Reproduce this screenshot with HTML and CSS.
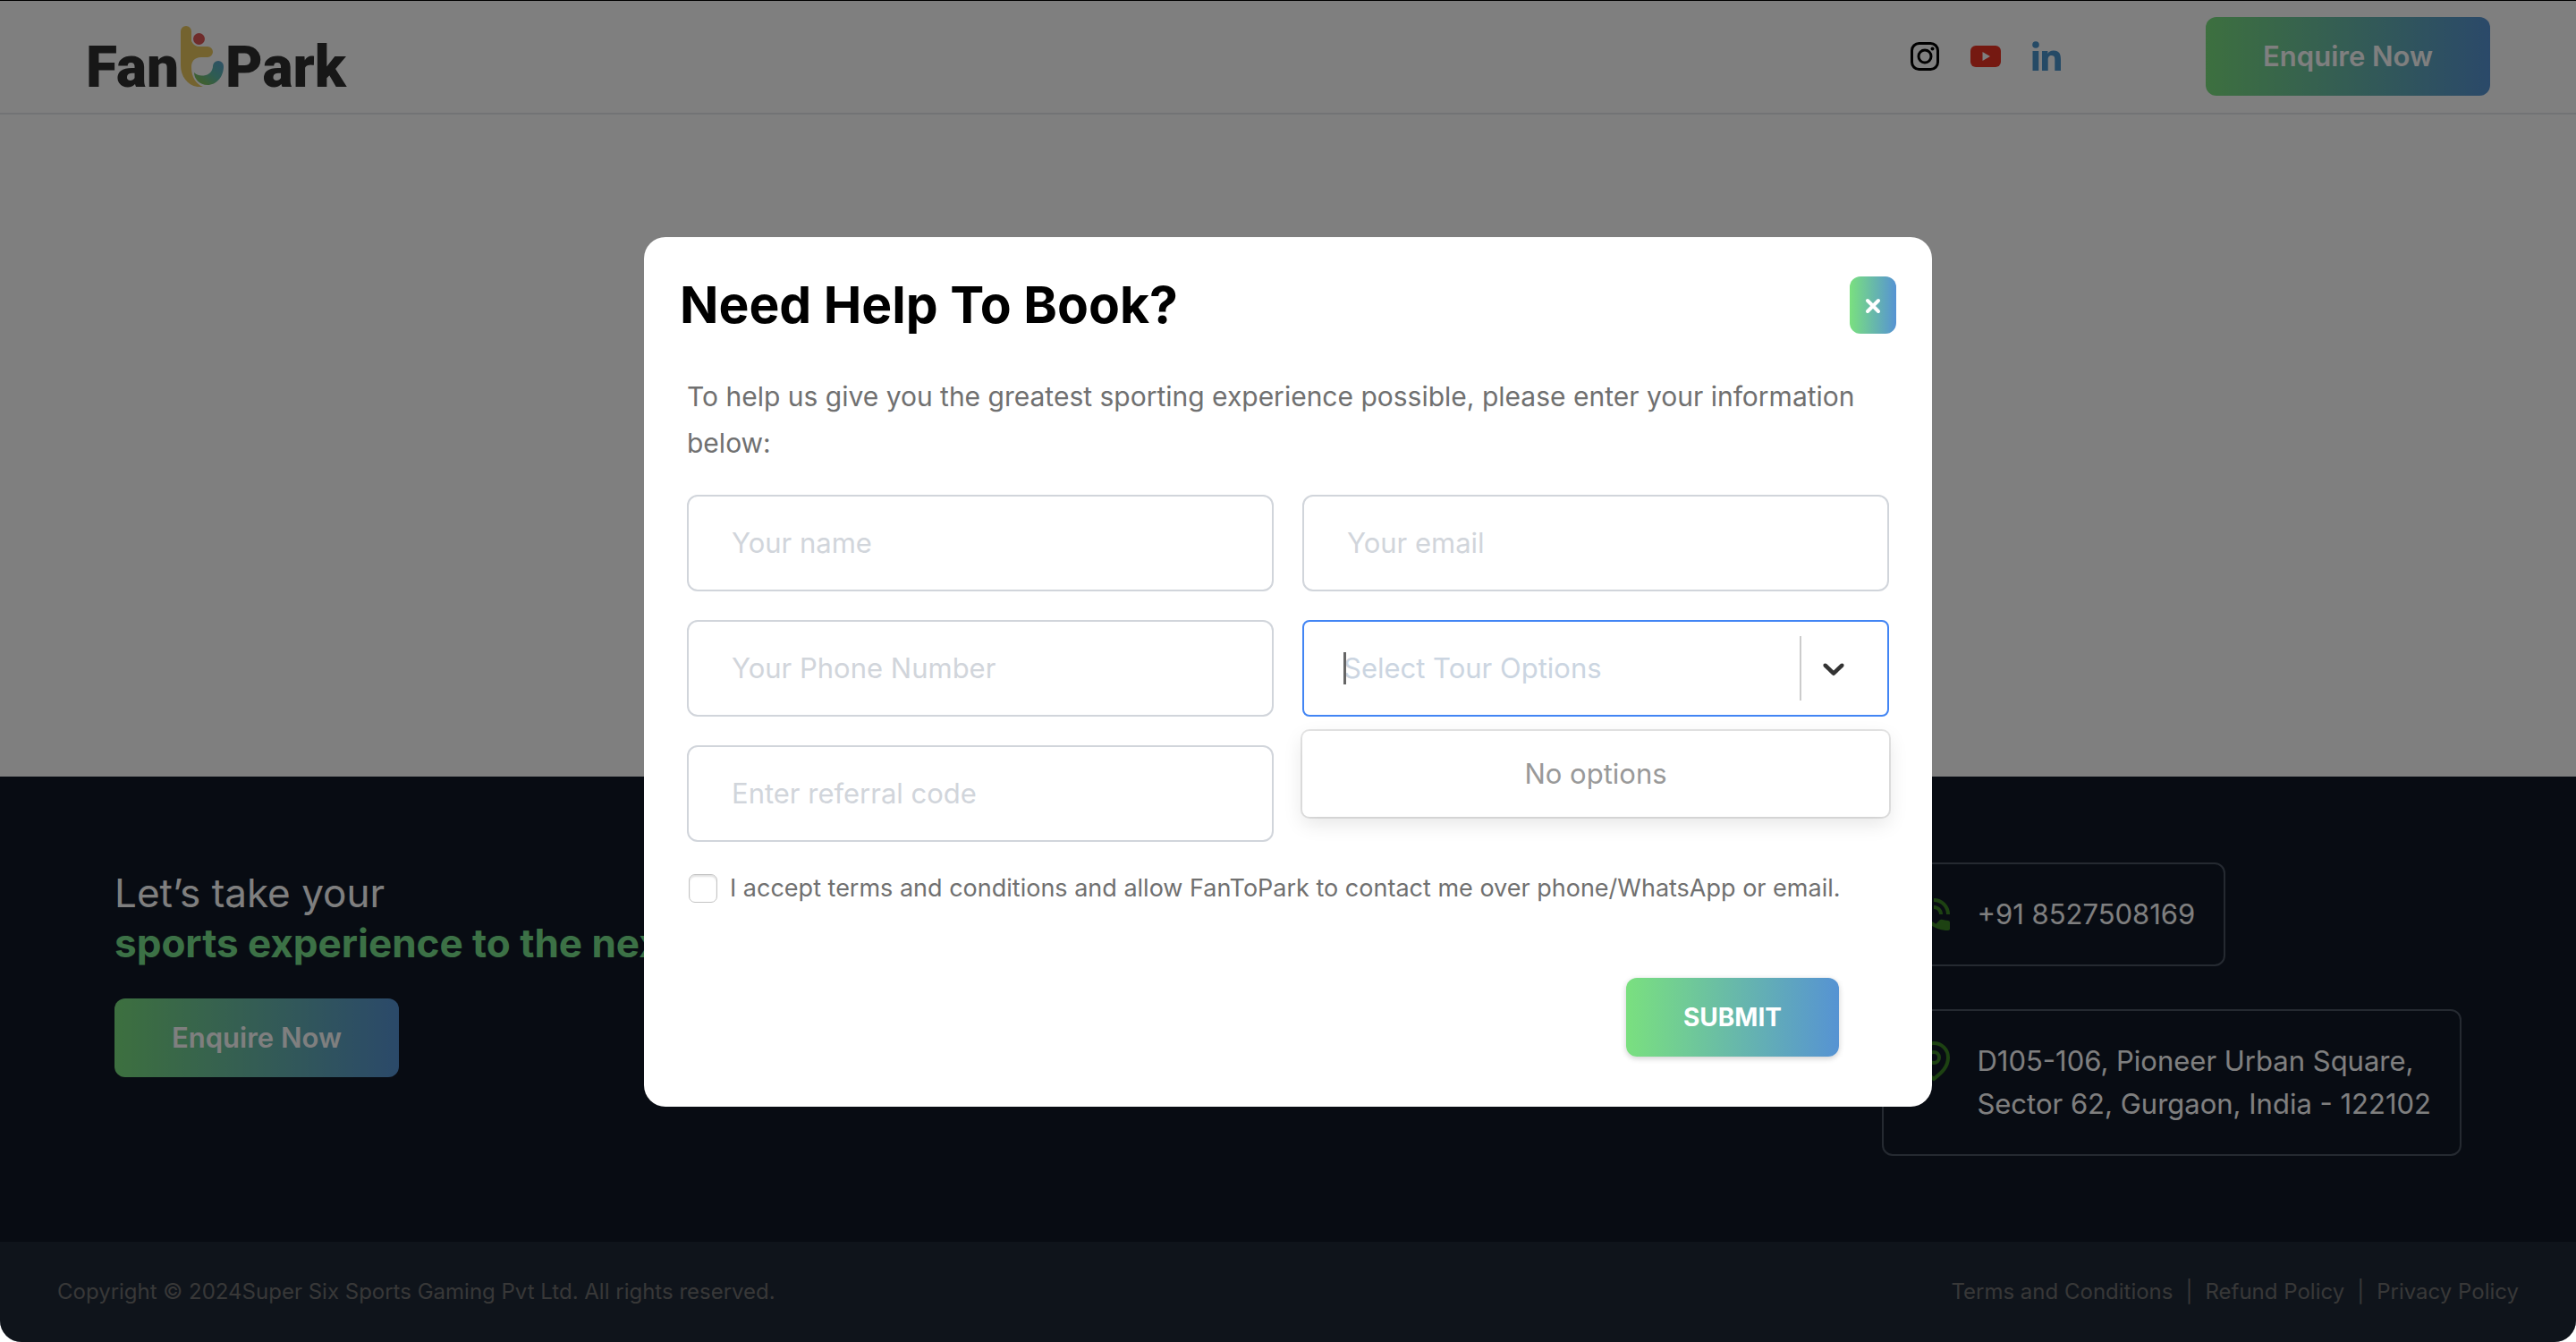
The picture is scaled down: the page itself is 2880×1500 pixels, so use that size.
FILE: index.html
```html
<!DOCTYPE html>
<html lang="en">
<head>
<meta charset="utf-8">
<title>FanToPark</title>
<meta name="viewport" content="width=device-width, initial-scale=1">
<link rel="stylesheet" href="styles.css">
</head>
<body>
<div class="page">
  <header class="site-header">
    <a class="logo" href="#" aria-label="FanToPark">
      <span class="logo-word">Fan</span>
      <svg class="logo-mark" viewBox="0 0 48 68" aria-hidden="true">
        <defs>
          <linearGradient id="smile" x1="0" y1="1" x2="1" y2="0">
            <stop offset="0.2" stop-color="#7ec063"/>
            <stop offset="0.55" stop-color="#5cb8a8"/>
            <stop offset="1" stop-color="#5b9fce"/>
          </linearGradient>
        </defs>
        <path fill="#e9c75f" d="M0 6a6 6 0 0 1 12 0v11q3 6 9 6h9a6 6 0 0 1 0 12h-7c-8 0-11 5-11 11 0 11 5 19 13 22C10 70 0 58 0 44z"/>
        <circle cx="20.500" cy="14.500" r="6.500" fill="#df5856"/>
        <path fill="url(#smile)" d="M15 52c4 4 9 4 13 3 5-1 8-6 8-10a6 6 0 0 1 12 0c0 12-8 21-18 21-9 0-15-7-15-14z"/>
      </svg>
      <span class="logo-word">Park</span>
    </a>
    <div class="header-actions">
      <nav class="social" aria-label="Social">
        <a href="#" aria-label="Instagram">
          <svg viewBox="0 0 36 36" fill="none" stroke="#000" stroke-width="3"><rect x="3.500" y="3.500" width="29" height="29" rx="8"/><circle cx="18" cy="18" r="7"/><circle cx="26.500" cy="9.500" r="2" fill="#000" stroke="none"/></svg>
        </a>
        <a href="#" aria-label="YouTube">
          <svg viewBox="0 0 36 36"><rect x="1" y="6" width="34" height="24" rx="6" fill="#ea3323"/><path d="M14.500 13v10l8.500-5z" fill="#fff"/></svg>
        </a>
        <a href="#" aria-label="LinkedIn">
          <svg viewBox="0 0 36 36" fill="#4b94cc"><circle cx="6" cy="5" r="3.800"/><path d="M2.500 12h6.800v22H2.500zM13 12h6.400v3c1-2 3.200-3.500 6.500-3.500 6.600 0 8.100 4.200 8.100 10V34h-6.700V22.500c0-2.600 0-5.400-3.600-5.400s-4 2.600-4 5.300V34H13z"/></svg>
        </a>
      </nav>
      <button class="btn btn-enquire" type="button">Enquire Now</button>
    </div>
  </header>

  <main class="content"></main>

  <footer class="site-footer">
    <section class="footer-main">
      <div class="pitch">
        <p class="pitch-text">Let’s take your<br><strong>sports experience to the next level</strong></p>
        <button class="btn btn-enquire" type="button">Enquire Now</button>
      </div>
      <address class="contacts">
        <a class="contact" href="tel:+918527508169">
          <svg viewBox="0 0 24 24" aria-hidden="true"><path fill="currentColor" d="M20 15.500c-1.250 0-2.450-.2-3.570-.57-.35-.11-.74-.03-1.020.24l-2.200 2.200c-2.830-1.440-5.150-3.750-6.590-6.590l2.200-2.210c.28-.26.36-.65.25-1C8.700 6.450 8.500 5.250 8.500 4c0-.55-.45-1-1-1H4c-.55 0-1 .45-1 1 0 9.390 7.610 17 17 17 .55 0 1-.45 1-1v-3.500c0-.55-.45-1-1-1zM19 12h2a9 9 0 0 0-9-9v2c3.870 0 7 3.130 7 7zm-4 0h2c0-2.760-2.240-5-5-5v2c1.660 0 3 1.340 3 3z"/></svg>
          <span>+91 8527508169</span>
        </a>
        <a class="contact" href="#">
          <svg viewBox="0 0 24 24" fill="none" stroke="currentColor" stroke-width="2" aria-hidden="true"><path d="M12 2a8 8 0 0 1 8 8c0 6.200-5 9.500-8 12-3-2.500-8-5.800-8-12a8 8 0 0 1 8-8z"/><circle cx="12" cy="10" r="3"/></svg>
          <span>D105-106, Pioneer Urban Square,<br>Sector 62, Gurgaon, India - 122102</span>
        </a>
      </address>
    </section>
    <section class="footer-bar">
      <p>Copyright © 2024Super Six Sports Gaming Pvt Ltd. All rights reserved.</p>
      <nav class="legal" aria-label="Legal">
        <a href="#">Terms and Conditions</a><span>|</span><a href="#">Refund Policy</a><span>|</span><a href="#">Privacy Policy</a>
      </nav>
    </section>
  </footer>
</div>

<div class="overlay">
  <div class="modal" role="dialog" aria-modal="true" aria-labelledby="modal-title">
    <div class="modal-header">
      <h2 id="modal-title">Need Help To Book?</h2>
      <button class="btn btn-close" type="button" aria-label="Close">
        <svg viewBox="0 0 20 20" stroke="#fff" stroke-width="4" stroke-linecap="round" aria-hidden="true"><path d="M4 5l12 12M16 5L4 17"/></svg>
      </button>
    </div>
    <form class="modal-body">
      <p class="intro">To help us give you the greatest sporting experience possible, please enter your information below:</p>
      <div class="fields">
        <input class="field" type="text" placeholder="Your name" aria-label="Your name">
        <input class="field" type="email" placeholder="Your email" aria-label="Your email">
        <input class="field" type="tel" placeholder="Your Phone Number" aria-label="Your Phone Number">
        <div class="select">
          <select class="field" aria-label="Select Tour Options"><option>Select Tour Options</option></select>
          <span class="caret"></span>
          <div class="select-indicator">
            <svg viewBox="0 0 20 20" aria-hidden="true"><path fill="#333" d="M4.516 7.548c.436-.446 1.043-.481 1.576 0L10 11.295l3.908-3.747c.533-.481 1.141-.446 1.574 0 .436.445.408 1.197 0 1.615-.406.418-4.695 4.502-4.695 4.502a1.095 1.095 0 0 1-1.576 0S4.924 9.581 4.516 9.163s-.436-1.170 0-1.615z"/></svg>
          </div>
          <div class="select-menu">No options</div>
        </div>
        <input class="field" type="text" placeholder="Enter referral code" aria-label="Enter referral code">
      </div>
      <label class="consent"><input type="checkbox"><span>I accept terms and conditions and allow FanToPark to contact me over phone/WhatsApp or email.</span></label>
      <div class="modal-actions"><button class="btn btn-submit" type="submit">SUBMIT</button></div>
    </form>
  </div>
</div>
</body>
</html>
```
FILE: styles.css
```css
*, *::before, *::after { box-sizing: border-box; }

html { background: #fff; }

body {
  margin: 0;
  font-family: Inter, "Liberation Sans", sans-serif;
  font-size: 31px;
  line-height: 48px;
  color: #707070;
}

p, h2 { margin: 0; }
a { color: inherit; text-decoration: none; }
svg { display: block; }
button, input, select { font: inherit; }

.page {
  display: flex;
  flex-direction: column;
  min-height: 100vh;
}

/* Buttons */
.btn {
  display: flex;
  align-items: center;
  justify-content: center;
  border: 0;
  border-radius: 12px;
  color: #fff;
  background: linear-gradient(90deg, #7ae07f, #5693d3);
  cursor: pointer;
}
.btn-enquire {
  height: 88px;
  padding: 0 64px;
  font-weight: 600;
  line-height: 48px;
}

/* Header */
.site-header {
  display: flex;
  align-items: center;
  justify-content: space-between;
  height: 128px;
  padding: 0 96px;
  border-bottom: 2px solid #e5e7eb;
}
.logo { display: flex; align-items: baseline; gap: 2px; }
.logo-mark { width: 48px; height: 68px; }
.logo-word {
  font-family: Roboto, "Liberation Sans", sans-serif;
  font-size: 64px;
  font-weight: 900;
  line-height: 44px;
  color: #2e2e2e;
}
.header-actions { display: flex; align-items: center; gap: 160px; }
.social { display: flex; gap: 32px; }
.social svg { width: 36px; height: 36px; }

.content { flex: 1; }

/* Footer */
.footer-main {
  display: flex;
  justify-content: space-between;
  align-items: flex-start;
  padding: 96px 128px;
  background: #111827;
  color: #fff;
}
.pitch { display: flex; flex-direction: column; align-items: flex-start; gap: 34px; padding-top: 6px; }
.pitch-text { font-size: 44px; line-height: 56px; }
.pitch-text strong { font-weight: 700; color: #78e28c; }
.contacts {
  display: flex;
  flex-direction: column;
  align-items: flex-start;
  gap: 48px;
  font-style: normal;
}
.contact {
  display: flex;
  align-items: flex-start;
  gap: 24px;
  padding: 32px;
  border: 2px solid #4b5563;
  border-radius: 12px;
}
.contact svg { width: 48px; height: 48px; color: #3b8425; }
.footer-bar {
  display: flex;
  align-items: center;
  justify-content: space-between;
  height: 112px;
  padding: 0 64px;
  border-radius: 0 0 24px 24px;
  background: #1f2937;
  color: #707070;
  font-size: 24px;
  line-height: 32px;
}
.legal { display: flex; gap: 14px; }

/* Modal */
.overlay {
  position: fixed;
  inset: 0;
  display: flex;
  align-items: center;
  justify-content: center;
  border-top: 1px solid #000;
  border-radius: 0 0 24px 24px;
  background: rgba(0, 0, 0, 0.5);
}
.modal {
  width: 50%;
  border-radius: 24px;
  background: #fff;
}
.modal-header {
  display: flex;
  align-items: center;
  justify-content: space-between;
  padding: 44px 40px 0;
}
.modal-header h2 {
  font-size: 57px;
  font-weight: 700;
  line-height: 64px;
  color: #000;
}
.btn-close { width: 52px; height: 64px; padding: 0; }
.btn-close svg { width: 20px; height: 20px; }
.modal-body { padding: 44px 48px 56px; }
.intro { font-size: 30px; line-height: 52px; }

.fields {
  display: grid;
  grid-template-columns: 1fr 1fr;
  gap: 32px;
  margin-top: 32px;
}
.field {
  width: 100%;
  height: 108px;
  padding: 0 48px;
  border: 2px solid #d1d5db;
  border-radius: 12px;
  outline: 0;
  background: #fff;
  color: #707070;
}
.field::placeholder { color: #d1d5db; opacity: 1; }

.select { position: relative; }
.select .field {
  appearance: none;
  padding: 0 44px;
  border-color: #4285f4;
  border-radius: 8px;
  color: #cbd5e1;
}
.caret {
  position: absolute;
  left: 46px;
  top: 36px;
  width: 3px;
  height: 36px;
  background: #666;
}
.select-indicator {
  position: absolute;
  top: 18px;
  right: 42px;
  display: flex;
  align-items: center;
  height: 72px;
  padding-left: 16px;
  border-left: 2px solid #ccc;
  pointer-events: none;
}
.select-indicator svg { width: 40px; height: 40px; }
.select-menu {
  position: absolute;
  top: 124px;
  left: 0;
  right: 0;
  padding: 24px;
  border-radius: 8px;
  background: #fff;
  box-shadow: 0 0 0 2px rgba(0, 0, 0, 0.1), 0 8px 22px rgba(0, 0, 0, 0.1);
  color: #999;
  text-align: center;
}

.consent {
  display: flex;
  align-items: center;
  gap: 14px;
  margin-top: 36px;
  padding-left: 2px;
  font-size: 27px;
  line-height: 32px;
}
.consent input {
  flex: none;
  appearance: none;
  width: 32px;
  height: 32px;
  margin: 0;
  border: 1px solid #c4c4c4;
  border-radius: 7px;
  background: #fff;
  box-shadow: inset 0 2px 2px rgba(0, 0, 0, 0.12);
}
.modal-actions { display: flex; justify-content: flex-end; margin-top: 84px; padding-right: 56px; }
.btn-submit {
  height: 88px;
  padding: 0 64px;
  font-size: 28px;
  font-weight: 700;
  box-shadow: 0 2px 6px rgba(0, 0, 0, 0.2);
}
```
